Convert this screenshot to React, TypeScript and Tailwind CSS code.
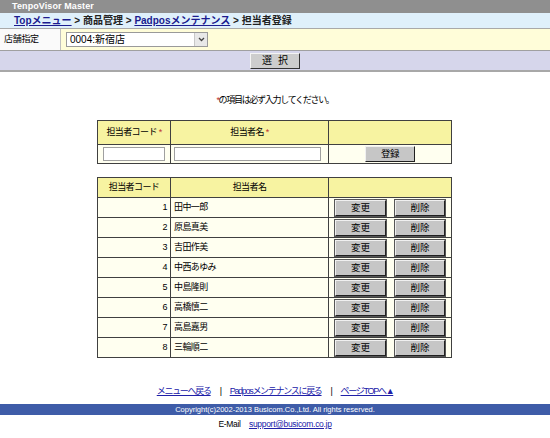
import React from "react";

const font = { fontFamily: '"Liberation Sans","Noto Sans CJK JP",sans-serif' };

const rows = [
  [1, "田中一郎"],
  [2, "原島真美"],
  [3, "吉田作美"],
  [4, "中西あゆみ"],
  [5, "中島隆則"],
  [6, "高橋慎二"],
  [7, "高島嘉男"],
  [8, "三輪順二"],
];

function Btn({ label, w }: { label: string; w: string }) {
  return (
    <button
      className={`${w} h-[16px] bg-[#c6c6c6] text-[9.5px] leading-none text-black border border-t-[#f0f0f0] border-l-[#f0f0f0] border-r-[#202020] border-b-[#202020] outline outline-1 outline-[#555]`}
      style={font}
    >
      {label}
    </button>
  );
}

export default function App() {
  return (
    <div className="w-[550px] h-[438px] bg-white text-black overflow-hidden" style={font}>
      <div className="h-[13px] bg-[#8f8f8f] pl-[12px] text-[9px] font-bold text-white leading-[13px] tracking-[0.1px]">
        TenpoVisor Master
      </div>
      <div className="h-[16px] bg-[#dff0fb] pl-[14px] text-[10px] font-bold leading-[16px] text-[#222] border-b border-[#a9a9a9]">
        <span className="text-[#1b1b8f] underline">Topメニュー</span> &gt; 商品管理 &gt;{" "}
        <span className="text-[#1b1b8f] underline">Padposメンテナンス</span> &gt; 担当者登録
      </div>
      <div className="grid grid-cols-[61px_1fr] h-[22px] border-b border-[#a0a0a0]">
        <div className="bg-[#fafafa] border-r border-[#c0c0c0] text-[9px] tracking-[-0.3px] pl-[4px] leading-[20px]">店舗指定</div>
        <div className="bg-[#fffdd9] flex items-center pl-[5px]">
          <div className="w-[142px] h-[15px] bg-white border border-[#9a9a9a] flex items-center">
            <span className="flex-1 text-[10px] pl-[3px] leading-none">0004:新宿店</span>
            <span className="w-[13px] h-[13px] bg-[#e8e8e8] border-l border-[#c8c8c8] flex items-center justify-center">
              <svg width="7" height="5" viewBox="0 0 7 5">
                <path d="M1 1 L3.5 3.5 L6 1" stroke="#444" strokeWidth="1.3" fill="none" />
              </svg>
            </span>
          </div>
        </div>
      </div>
      <div className="h-[21px] bg-[#d6d6eb] border-b-2 border-[#a8a8a8] flex items-center justify-center">
        <button
          className="w-[50px] h-[16px] bg-[#cdcdcd] text-[10px] leading-none border border-t-[#f4f4f4] border-l-[#f4f4f4] border-r-[#333] border-b-[#333] tracking-[6px] pl-[6px]"
          style={font}
        >
          選択
        </button>
      </div>

      <div className="mt-[22px] text-center text-[9px] tracking-[-1.3px] leading-[12px]">
        <span className="text-[#c03030]">*</span>の項目は必ず入力してください。
      </div>

      <table className="mt-[14px] ml-[97px] w-[355px] border-collapse border border-[#8a8a8a] text-[9px] tracking-[-0.6px]">
        <tbody>
          <tr className="h-[24px] bg-[#f7f3a1]">
            <td className="w-[73px] text-center border border-[#404040]">
              担当者コード <span className="text-[#c03030]">*</span>
            </td>
            <td className="w-[158px] text-center border border-[#404040]">
              担当者名 <span className="text-[#c03030]">*</span>
            </td>
            <td className="border border-[#404040]"></td>
          </tr>
          <tr className="h-[19px] bg-[#fffff0]">
            <td className="border border-[#404040] px-[5px]">
              <div className="h-[14px] bg-white border border-[#a0a0a0]"></div>
            </td>
            <td className="border border-[#404040] pl-[3px] pr-[7px]">
              <div className="h-[14px] bg-white border border-[#a0a0a0]"></div>
            </td>
            <td className="border border-[#404040] text-center">
              <button
                className="w-[50px] h-[16px] bg-[#c6c6c6] text-[9.5px] leading-none border border-t-[#f0f0f0] border-l-[#f0f0f0] border-r-[#202020] border-b-[#202020]"
                style={font}
              >
                登録
              </button>
            </td>
          </tr>
        </tbody>
      </table>

      <table className="mt-[13px] ml-[97px] w-[355px] border-collapse border border-[#8a8a8a] text-[9px] tracking-[-0.6px]">
        <tbody>
          <tr className="h-[20px] bg-[#f7f3a1]">
            <td className="w-[73px] text-center border border-[#404040]">担当者コード</td>
            <td className="w-[158px] text-center border border-[#404040]">担当者名</td>
            <td className="border border-[#404040]"></td>
          </tr>
          {rows.map(([n, name]) => (
            <tr key={n} className="h-[20px] bg-[#fffff0]">
              <td className="text-right pr-[3px] border border-[#404040]">{n}</td>
              <td className="pl-[3px] border border-[#404040]">{name}</td>
              <td className="border border-[#404040] tracking-normal">
                <div className="flex items-center pl-[6px] gap-[9px]">
                  <Btn label="変更" w="w-[51px]" />
                  <Btn label="削除" w="w-[50px]" />
                </div>
              </td>
            </tr>
          ))}
        </tbody>
      </table>

      <div className="mt-[27px] flex justify-center items-center gap-[9px] text-[9px] tracking-[-1.3px] leading-[12px]">
        <span className="text-[#2020a8] underline">メニューへ戻る</span>
        <span>|</span>
        <span className="text-[#2020a8] underline">Padposメンテナンスに戻る</span>
        <span>|</span>
        <span className="text-[#2020a8] underline">ページTOPへ▲</span>
      </div>
      <div className="mt-[7px] h-[11px] bg-[#3e5ca8] text-white text-[7.5px] leading-[11px] text-center">
        Copyright(c)2002-2013 Busicom.Co.,Ltd. All rights reserved.
      </div>
      <div className="mt-[3px] text-center text-[8.5px] tracking-[-0.3px] leading-[12px]">
        E-Mail&nbsp;&nbsp;&nbsp; <span className="text-[#2020a8] underline">support@busicom.co.jp</span>
      </div>
    </div>
  );
}
